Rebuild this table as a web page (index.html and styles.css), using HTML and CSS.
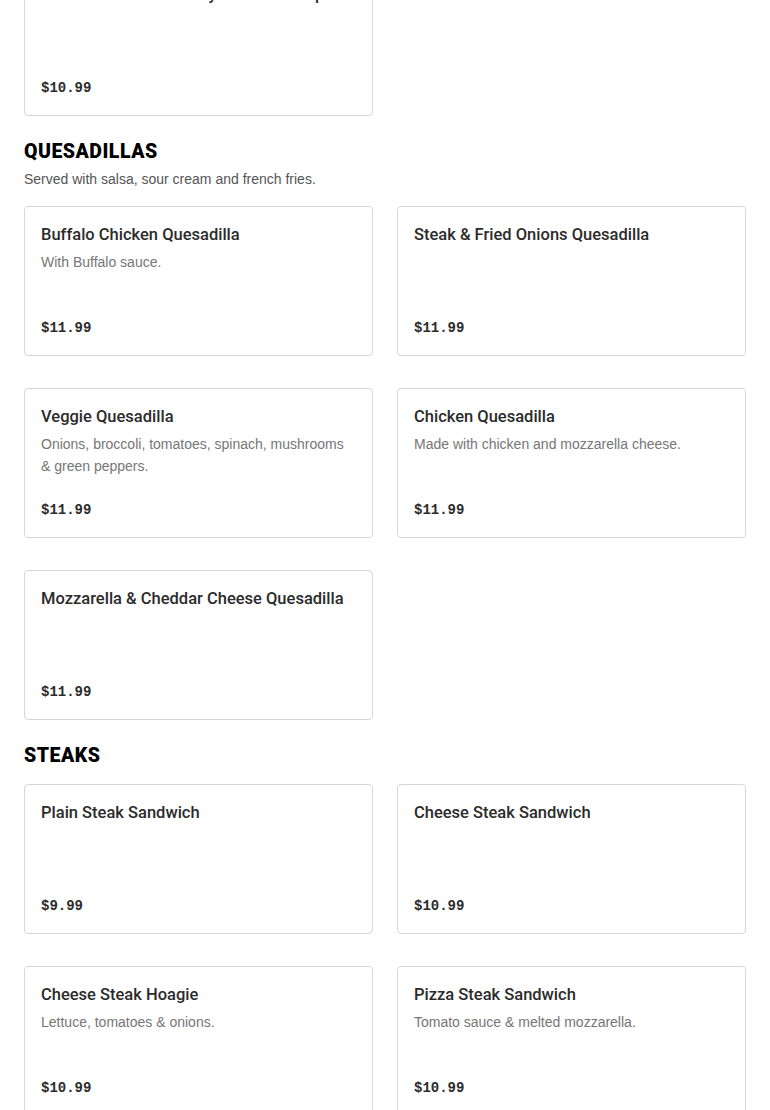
FILE: index.html
```html
<!DOCTYPE html>
<html lang="en">
<head>
<meta charset="utf-8">
<title>Menu</title>
<link rel="stylesheet" href="styles.css">
</head>
<body>
<main class="menu">
  <section class="section section-top">
    <div class="grid">
      <article class="card">
        <h3 class="item-name">Chicken Bacon &amp; Honey Mustard Wrap</h3>
        <div class="price">$10.99</div>
      </article>
    </div>
  </section>

  <section class="section">
    <header class="section-head">
      <h2 class="section-title">QUESADILLAS</h2>
      <p class="section-desc">Served with salsa, sour cream and french fries.</p>
    </header>
    <div class="grid">
      <article class="card">
        <h3 class="item-name">Buffalo Chicken Quesadilla</h3>
        <p class="item-desc">With Buffalo sauce.</p>
        <div class="price">$11.99</div>
      </article>
      <article class="card">
        <h3 class="item-name">Steak &amp; Fried Onions Quesadilla</h3>
        <div class="price">$11.99</div>
      </article>
      <article class="card">
        <h3 class="item-name">Veggie Quesadilla</h3>
        <p class="item-desc">Onions, broccoli, tomatoes, spinach, mushrooms &amp; green peppers.</p>
        <div class="price">$11.99</div>
      </article>
      <article class="card">
        <h3 class="item-name">Chicken Quesadilla</h3>
        <p class="item-desc">Made with chicken and mozzarella cheese.</p>
        <div class="price">$11.99</div>
      </article>
      <article class="card">
        <h3 class="item-name">Mozzarella &amp; Cheddar Cheese Quesadilla</h3>
        <div class="price">$11.99</div>
      </article>
    </div>
  </section>

  <section class="section">
    <header class="section-head">
      <h2 class="section-title">STEAKS</h2>
    </header>
    <div class="grid">
      <article class="card">
        <h3 class="item-name">Plain Steak Sandwich</h3>
        <div class="price">$9.99</div>
      </article>
      <article class="card">
        <h3 class="item-name">Cheese Steak Sandwich</h3>
        <div class="price">$10.99</div>
      </article>
      <article class="card">
        <h3 class="item-name">Cheese Steak Hoagie</h3>
        <p class="item-desc">Lettuce, tomatoes &amp; onions.</p>
        <div class="price">$10.99</div>
      </article>
      <article class="card">
        <h3 class="item-name">Pizza Steak Sandwich</h3>
        <p class="item-desc">Tomato sauce &amp; melted mozzarella.</p>
        <div class="price">$10.99</div>
      </article>
    </div>
  </section>
</main>
</body>
</html>
```

FILE: styles.css
```css
* { box-sizing: border-box; }

html, body {
  margin: 0;
  padding: 0;
  background: #ffffff;
}

body {
  font-family: "Liberation Sans", Arial, sans-serif;
  color: #2d2d2d;
  overflow: hidden;
}

.menu {
  padding: 0 24px;
  margin-top: -34px;
  display: flex;
  flex-direction: column;
  gap: 22px;
}

.section-head {
  display: flex;
  flex-direction: column;
  margin-bottom: 14px;
}

.section-title {
  margin: 0;
  font-family: Roboto, "Liberation Sans", Arial, sans-serif;
  font-weight: 900;
  font-size: 19.5px;
  line-height: 28px;
  color: #000;
  letter-spacing: 0.5px;
}

.section-desc {
  margin: 3px 0 3px;
  font-size: 14px;
  line-height: 20px;
  color: #555;
}

.grid {
  display: grid;
  grid-template-columns: 1fr 1fr;
  column-gap: 24px;
  row-gap: 32px;
}

.card {
  height: 150px;
  border: 1px solid #d6d6d6;
  border-radius: 4px;
  padding: 16px 16px 17px;
  display: flex;
  flex-direction: column;
  background: #fff;
}

.item-name {
  margin: 0;
  font-family: Roboto, "Liberation Sans", Arial, sans-serif;
  font-size: 16.5px;
  line-height: 24px;
  font-weight: 500;
  color: #2b2b2b;
}

.item-desc {
  margin: 4px 0 0;
  font-size: 14px;
  line-height: 22px;
  color: #767676;
}

.price {
  margin-top: auto;
  font-family: "Liberation Mono", "Courier New", monospace;
  font-weight: 700;
  font-size: 14px;
  line-height: 20px;
  color: #2b2b2b;
}
```
